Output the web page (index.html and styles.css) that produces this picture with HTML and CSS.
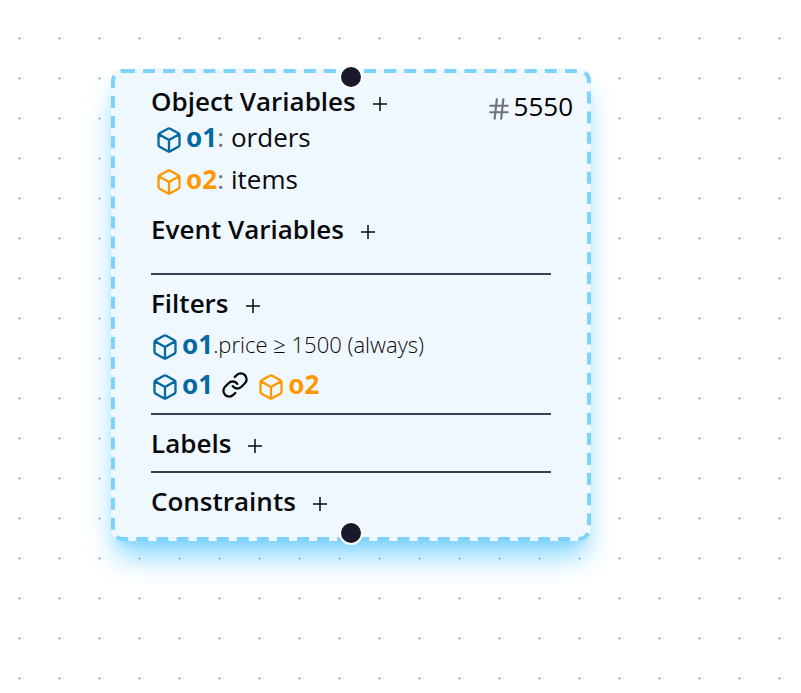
FILE: index.html
```html
<!DOCTYPE html>
<html lang="en">
<head>
<meta charset="utf-8">
<meta name="viewport" content="width=device-width, initial-scale=1">
<title>Query node 5550</title>
<link rel="stylesheet" href="styles.css">
</head>
<body>
<svg class="defs" aria-hidden="true">
  <symbol id="cube" viewBox="0 0 24 24"><path d="M21 16V8a2 2 0 0 0-1-1.730l-7-4a2 2 0 0 0-2 0l-7 4A2 2 0 0 0 3 8v8a2 2 0 0 0 1 1.730l7 4a2 2 0 0 0 2 0l7-4A2 2 0 0 0 21 16zM3.300 7L12 12l8.700-5M12 22V12"/></symbol>
  <symbol id="link" viewBox="0 0 24 24"><path d="M10 13a5 5 0 0 0 7.540.540l3-3a5 5 0 0 0-7.070-7.070l-1.720 1.710M14 11a5 5 0 0 0-7.540-.540l-3 3a5 5 0 0 0 7.070 7.070l1.710-1.710"/></symbol>
  <symbol id="hash" viewBox="0 0 24 24"><path d="M4 9h16M4 15h16M10 3L8 21M16 3l-2 18"/></symbol>
  <symbol id="plus" viewBox="0 0 14 14"><path d="M7 0v14M0 7h14"/></symbol>
</svg>
<main class="canvas">
  <svg class="dots" aria-hidden="true">
    <pattern id="dot" width="40" height="40" patternUnits="userSpaceOnUse"><circle cx="19.5" cy="38.5" r="1"/></pattern>
    <rect width="100%" height="100%" fill="url(#dot)"/>
  </svg>
  <article class="node">
    <span class="handle handle-top"></span>
    <p class="count"><svg class="icon hash"><use href="#hash"/></svg>5550</p>
    <section>
      <div class="heading"><h2>Object Variables</h2><button class="add" aria-label="Add object variable"><svg><use href="#plus"/></svg></button></div>
      <ul class="variables">
        <li><span class="var blue"><svg class="icon"><use href="#cube"/></svg><b>o1</b></span><span class="colon">:</span><span class="type">orders</span></li>
        <li><span class="var orange"><svg class="icon"><use href="#cube"/></svg><b>o2</b></span><span class="colon">:</span><span class="type">items</span></li>
      </ul>
      <div class="heading events"><h2>Event Variables</h2><button class="add" aria-label="Add event variable"><svg><use href="#plus"/></svg></button></div>
    </section>
    <hr class="wide">
    <section>
      <div class="heading"><h2>Filters</h2><button class="add" aria-label="Add filter"><svg><use href="#plus"/></svg></button></div>
      <ul class="filters">
        <li><span class="var blue"><svg class="icon"><use href="#cube"/></svg><b>o1</b></span><span class="condition">.price ≥ 1500 (always)</span></li>
        <li><span class="var blue"><svg class="icon"><use href="#cube"/></svg><b>o1</b></span><svg class="icon link"><use href="#link"/></svg><span class="var orange"><svg class="icon"><use href="#cube"/></svg><b>o2</b></span></li>
      </ul>
    </section>
    <hr>
    <section class="heading"><h2>Labels</h2><button class="add" aria-label="Add label"><svg><use href="#plus"/></svg></button></section>
    <hr>
    <section class="heading"><h2>Constraints</h2><button class="add" aria-label="Add constraint"><svg><use href="#plus"/></svg></button></section>
    <span class="handle handle-bottom"></span>
  </article>
</main>
</body>
</html>
```
FILE: styles.css
```css
*, *::before { box-sizing: border-box; }
body {
  margin: 0;
  color: #09090b;
  font-family: "Segoe UI", "Open Sans", "Noto Sans", sans-serif;
  font-size: 26px;
  line-height: 36px;
}
.defs { display: none; }
.canvas {
  position: relative;
  min-height: 100vh;
  padding: 69px 24px 69px 111px;
  background: #fff;
}
.dots {
  position: absolute;
  inset: 0;
  width: 100%;
  height: 100%;
  fill: #81818a;
}
.node {
  position: relative;
  max-width: 480px;
  padding: 14px 40px 22px;
  border-radius: 12px;
  background: #f0f8ff;
  box-shadow: 0 20px 30px -6px #7dd3fc, 0 8px 12px -8px #7dd3fc;
}
/* Drawn at half size and doubled, for the dash rhythm of a 2px border. */
.node::before {
  content: "";
  position: absolute;
  top: 0;
  left: 0;
  width: 50%;
  height: 50%;
  border: 2px dashed #7dd3fc;
  border-radius: 6px;
  transform: scale(2);
  transform-origin: 0 0;
  pointer-events: none;
}
.handle {
  position: absolute;
  left: 50%;
  width: 24px;
  height: 24px;
  border: 2px solid #fff;
  border-radius: 50%;
  background: #1a192b;
  transform: translateX(-50%);
}
.handle-top { top: -4px; }
.handle-bottom { bottom: -4px; }
.count {
  position: absolute;
  top: 19px;
  right: 18px;
  display: flex;
  align-items: center;
  gap: 2px;
  margin: 0;
  color: #000;
}
.heading { display: flex; align-items: center; gap: 17px; }
h2 { margin: 0; font-size: 26px; font-weight: 600; }
.add {
  display: flex;
  padding: 6px 0 0;
  border: 0;
  background: none;
  color: inherit;
}
.add svg { width: 14px; height: 14px; fill: none; stroke: currentColor; stroke-width: 1.5; }
ul { display: flex; flex-direction: column; margin: 0; padding: 0; list-style: none; }
li, .var { display: flex; align-items: center; }
.variables { gap: 6px; padding-left: 4px; }
.filters { gap: 4px; padding: 5px 0 1px; }
.icon {
  width: 28px;
  height: 28px;
  margin-top: 6px;
  fill: none;
  stroke: currentColor;
  stroke-width: 2;
  stroke-linecap: round;
  stroke-linejoin: round;
}
.var { gap: 3px; }
.var b { font-family: "Noto Sans", sans-serif; font-weight: 700; }
.blue { color: #0369a1; }
.orange { color: #ff9800; }
.colon { color: #71717a; }
.type { padding-left: 7px; }
.condition { font-weight: 300; font-size: 22px; }
.link { margin: 2px 8px 0; }
.hash { width: 26px; height: 26px; color: #71717a; }
.events { margin-top: 14px; }
hr { height: 2px; margin: 10px 0; border: 0; background: #334155; }
.wide { margin-top: 26px; }
```
